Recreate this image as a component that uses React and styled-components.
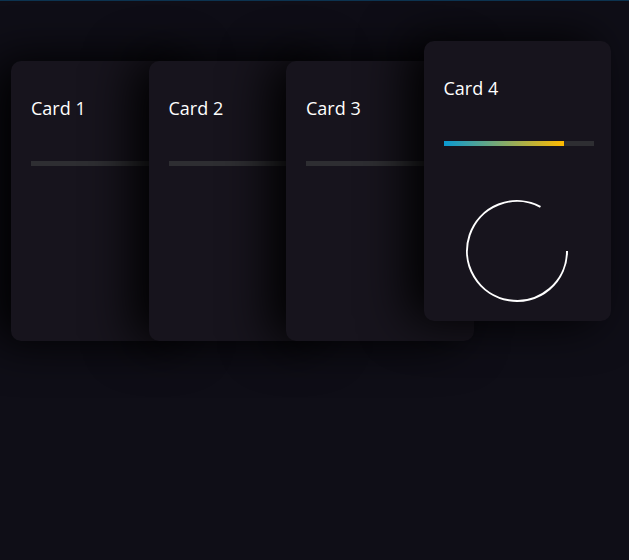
import styled, { createGlobalStyle } from "styled-components";

const GlobalStyle = createGlobalStyle`
  html, body {
    margin: 0;
    padding: 0;
    background: #0f0e17;
    min-height: 100%;
  }
  body {
    font-family: "Open Sans", "Noto Sans", sans-serif;
    color: #fffffe;
    border-top: 1px solid #0c3350;
    min-height: 559px;
  }
`;

const Stack = styled.div`
  display: flex;
  align-items: flex-start;
  padding: 60px 0 0 11px;
`;

const Card = styled.div`
  flex: 0 0 auto;
  box-sizing: border-box;
  width: 187.5px;
  height: 280px;
  padding: 34px 20px;
  border-radius: 10px;
  background: #17141d;
  box-shadow: -1rem 0 3rem #000;
  display: flex;
  flex-direction: column;
  transform: ${(p) => (p.$raised ? "translateY(-20px)" : "none")};

  & + & {
    margin-left: -50px;
  }
`;

const Title = styled.h2`
  margin: 0;
  font-size: 18px;
  font-weight: 400;
  line-height: 27px;
`;

const Bar = styled.div`
  flex: 0 0 auto;
  margin-top: 39px;
  width: 150px;
  height: 5px;
  background: #2e2e32;
  overflow: hidden;
`;

const Fill = styled.div`
  height: 100%;
  background: linear-gradient(90deg, #0a9ad2, #ffba00);
`;

const Ring = styled.svg`
  display: block;
  flex: 0 0 auto;
  align-self: center;
  margin-top: 53px;
`;

const cards = [
  { title: "Card 1", fill: 0 },
  { title: "Card 2", fill: 0 },
  { title: "Card 3", fill: 0 },
  { title: "Card 4", fill: 80, raised: true },
];

export default function App() {
  return (
    <>
      <GlobalStyle />
      <Stack>
        {cards.map((c) => (
          <Card key={c.title} $raised={c.raised}>
            <Title>{c.title}</Title>
            <Bar>
              <Fill style={{ width: `${c.fill}%` }} />
            </Bar>
            {c.raised && (
              <Ring width="104" height="104" viewBox="0 0 104 104">
                <path
                  d="M102 52 A50 50 0 1 1 75.47 7.85"
                  fill="none"
                  stroke="#fff"
                  strokeWidth="2"
                />
              </Ring>
            )}
          </Card>
        ))}
      </Stack>
    </>
  );
}
